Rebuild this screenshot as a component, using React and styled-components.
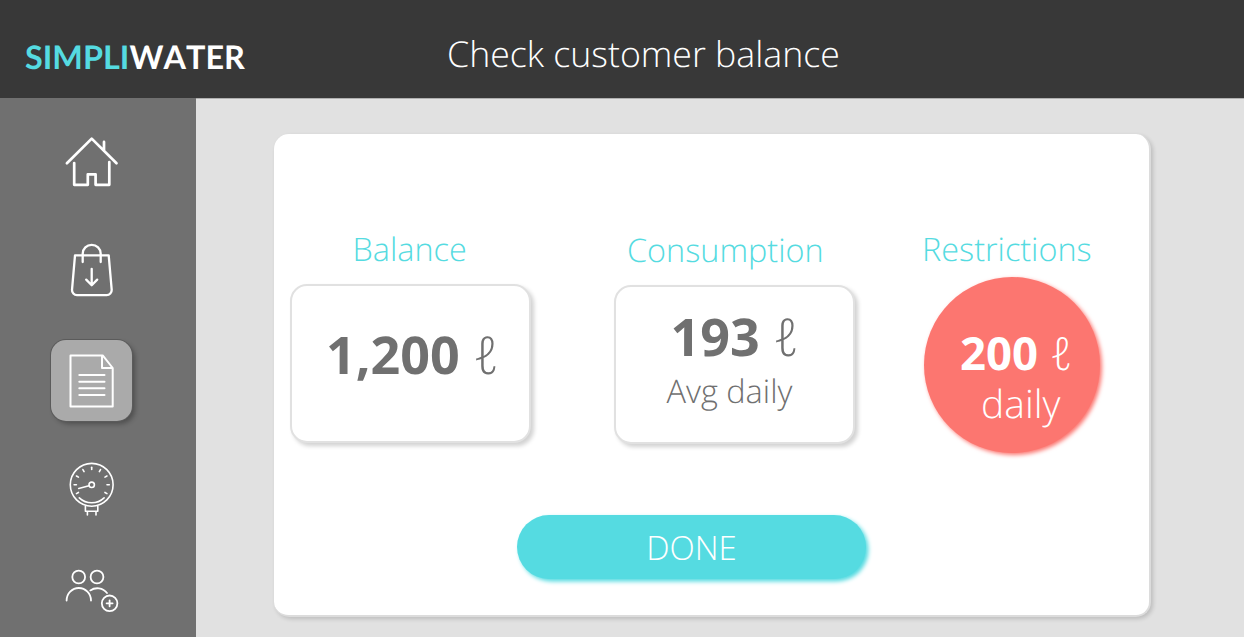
import React from "react";
import styled, { createGlobalStyle } from "styled-components";

const GlobalStyle = createGlobalStyle`
  *, *::before, *::after { box-sizing: border-box; }
  body {
    margin: 0;
    font-family: "Open Sans", "Noto Sans", sans-serif;
    font-weight: 300;
    background: #e1e1e1;
    text-rendering: geometricPrecision;
  }
`;

const Screen = styled.div`
  display: flex;
  flex-direction: column;
  width: 100%;
  height: 100vh;
  overflow: hidden;
`;

const Header = styled.header`
  display: flex;
  flex: 0 0 98px;
  padding-left: 25px;
  background: #383838;
  color: #fff;
  white-space: nowrap;
`;

const Logo = styled.div`
  width: 422px;
  padding-top: 36px;
  font-family: Lato, sans-serif;
  font-weight: 700;
  font-size: 32.4px;
  font-kerning: none;
  line-height: 42px;
`;

const LogoAccent = styled.span`
  color: #55dbe1;
`;

const Title = styled.h1`
  margin: 0;
  padding-top: 29px;
  font-size: 35.7px;
  font-weight: 300;
  line-height: 50px;
`;

const Body = styled.div`
  display: flex;
  flex: 1;
  min-height: 0;
`;

const Sidebar = styled.nav`
  display: flex;
  flex-direction: column;
  align-items: flex-start;
  gap: 28px;
  flex: 0 0 195.5px;
  padding: 24px 0 0 51px;
  background: #707070;
  overflow: hidden;
`;

const NavItem = styled.a`
  flex: none;
  width: 81px;
  height: 81px;
  border-radius: 15px;
  background: ${(p) => (p.$active ? "#aaa" : "transparent")};
  box-shadow: ${(p) =>
    p.$active ? "0 0 0 1px #5b5b5b, 3px 3px 5px rgba(0, 0, 0, 0.3)" : "none"};
`;

const NavIcon = styled.svg`
  display: block;
  width: 82px;
  height: 82px;
  fill: none;
  stroke: #fff;
  stroke-width: ${(p) => p.$weight};
  stroke-linecap: round;
  stroke-linejoin: round;
`;

const Main = styled.main`
  flex: 1;
  padding: 35px 0 0 78.5px;
  background: #e1e1e1;
  border-top: 1px solid #b0b0b0;
`;

const Card = styled.section`
  width: 877px;
  height: 483px;
  padding: 91px 0 0 16px;
  border-radius: 15px;
  border: solid #dcdcdc;
  border-width: 0 2px 2px 0;
  background: #fff;
  box-shadow: 2px 2px 4px rgba(0, 0, 0, 0.16);
`;

const Metrics = styled.div`
  display: flex;
  height: 290px;
`;

const Metric = styled.div`
  width: ${(p) => p.$width}px;
  margin-right: ${(p) => p.$gap || 0}px;
`;

const Label = styled.h2`
  margin: ${(p) => p.$top}px 0 ${(p) => p.$bottom}px ${(p) => p.$left}px;
  color: #55dbe1;
  font-size: 32.4px;
  font-weight: 300;
  line-height: 44px;
  white-space: nowrap;
`;

const Panel = styled.div`
  width: 241px;
  height: 159px;
  padding-top: ${(p) => p.$top}px;
  border: 2px solid #e1e1e1;
  border-radius: 17px;
  background: #fff;
  box-shadow: 3px 3px 4px rgba(0, 0, 0, 0.18);
  color: #707070;
`;

const Disc = styled.div`
  width: 176px;
  height: 176px;
  padding-top: 46px;
  border-radius: 50%;
  background: #fc7670;
  box-shadow: 2px 2px 4px #fc7670;
  color: #fff;
`;

const Value = styled.div`
  padding-left: ${(p) => p.$left}px;
  font-size: ${(p) => p.$size}px;
  line-height: 60px;
  white-space: nowrap;
`;

const Amount = styled.strong`
  font-weight: 700;
`;

const Note = styled.div`
  padding-left: ${(p) => p.$left}px;
  font-size: ${(p) => p.$size}px;
  line-height: ${(p) => p.$line}px;
  white-space: nowrap;
`;

const DoneButton = styled.button`
  display: block;
  width: 349px;
  height: 64px;
  margin-left: 227px;
  padding: 2px 0 0;
  border: 0;
  border-radius: 32px;
  background: #55dbe1;
  box-shadow: 2.5px 2.5px 4px #55dbe1;
  color: #fff;
  font: 300 33px/62px "Open Sans", sans-serif;
`;

const ticks = [-120, -90, -60, -30, 0, 30, 60, 90, 120];

function HomeIcon() {
  return (
    <NavIcon viewBox="0 0 82 82" $weight={2.7}>
      <path d="M15.9 41.3 40.7 16.6l24.8 24.7M53 19.9v8" />
      <path d="M23.2 41v21.8h13.6V52.3h7.8v10.5h13.7V40" />
    </NavIcon>
  );
}

function BagIcon() {
  return (
    <NavIcon viewBox="0 0 82 82" $weight={2.3}>
      <path d="M24 24.4h33.7l3 34.4a5 5 0 0 1-5 5.3H26a5 5 0 0 1-5-5.3z" />
      <path d="M31.7 31v-8.2a9 9 0 0 1 18 0V31" />
      <path d="M40.7 37.8V54M35.2 48.6l5.5 5.6 5.5-5.6" />
    </NavIcon>
  );
}

function DocumentIcon() {
  return (
    <NavIcon viewBox="0 0 82 82" $weight={2}>
      <path d="M19.5 15.4h32.2l10 12.6v38.4H19.5zM51 15.6V28h10.6" />
      <path d="M28.3 35h25.2M28.3 41.8h25.2M28.3 48.2h25.2M28.3 55h25.2" />
    </NavIcon>
  );
}

function MeterIcon() {
  return (
    <NavIcon viewBox="0 0 82 82" $weight={1.6}>
      <circle cx="40.7" cy="35.8" r="21.4" />
      <circle cx="40.7" cy="35.8" r="2.7" />
      <path d="M38 36.7l-10.3 2.7M28.3 48.8a18 18 0 0 0 24.8 0M34.4 57v5.2h12.4V57M36.4 62.2V66M45 62.2V66" />
      {ticks.map((a) => (
        <path key={a} d="M40.7 18.2v2.3" transform={`rotate(${a} 40.7 35.8)`} />
      ))}
    </NavIcon>
  );
}

function AddUsersIcon() {
  return (
    <NavIcon viewBox="0 0 82 82" $weight={1.8}>
      <circle cx="27.7" cy="19" r="6.4" />
      <circle cx="46" cy="19" r="6.4" />
      <path d="M15.6 42.6a12.2 12.6 0 0 1 24.4 0M39.3 32.4c5-3.4 12.700-3 16.700 2.700" />
      <circle cx="58.6" cy="45.3" r="7.8" />
      <path d="M58.600 42.300v6M55.600 45.300h6" />
    </NavIcon>
  );
}

export default function App() {
  return (
    <Screen>
      <GlobalStyle />
      <Header>
        <Logo>
          <LogoAccent>SIMPLI</LogoAccent>WATER
        </Logo>
        <Title>Check customer balance</Title>
      </Header>
      <Body>
        <Sidebar>
          <NavItem><HomeIcon /></NavItem>
          <NavItem><BagIcon /></NavItem>
          <NavItem $active><DocumentIcon /></NavItem>
          <NavItem><MeterIcon /></NavItem>
          <NavItem><AddUsersIcon /></NavItem>
        </Sidebar>
        <Main>
          <Card>
            <Metrics>
              <Metric $width={241} $gap={83}>
                <Label $top={2} $bottom={13} $left={62.5}>Balance</Label>
                <Panel $top={39}>
                  <Value $size={52} $left={34}><Amount>1,200</Amount> ℓ</Value>
                </Panel>
              </Metric>
              <Metric $width={241} $gap={69}>
                <Label $top={3} $bottom={12.5} $left={13}>Consumption</Label>
                <Panel $top={20}>
                  <Value $size={52} $left={54.5}><Amount>193</Amount> ℓ</Value>
                  <Note $size={32.5} $left={50.5} $line={48}>Avg daily</Note>
                </Panel>
              </Metric>
              <Metric $width={176}>
                <Label $top={2} $bottom={5.5} $left={-2}>Restrictions</Label>
                <Disc>
                  <Value $size={45.5} $left={36}><Amount>200</Amount> ℓ</Value>
                  <Note $size={39} $left={57} $line={41}>daily</Note>
                </Disc>
              </Metric>
            </Metrics>
            <DoneButton>DONE</DoneButton>
          </Card>
        </Main>
      </Body>
    </Screen>
  );
}
